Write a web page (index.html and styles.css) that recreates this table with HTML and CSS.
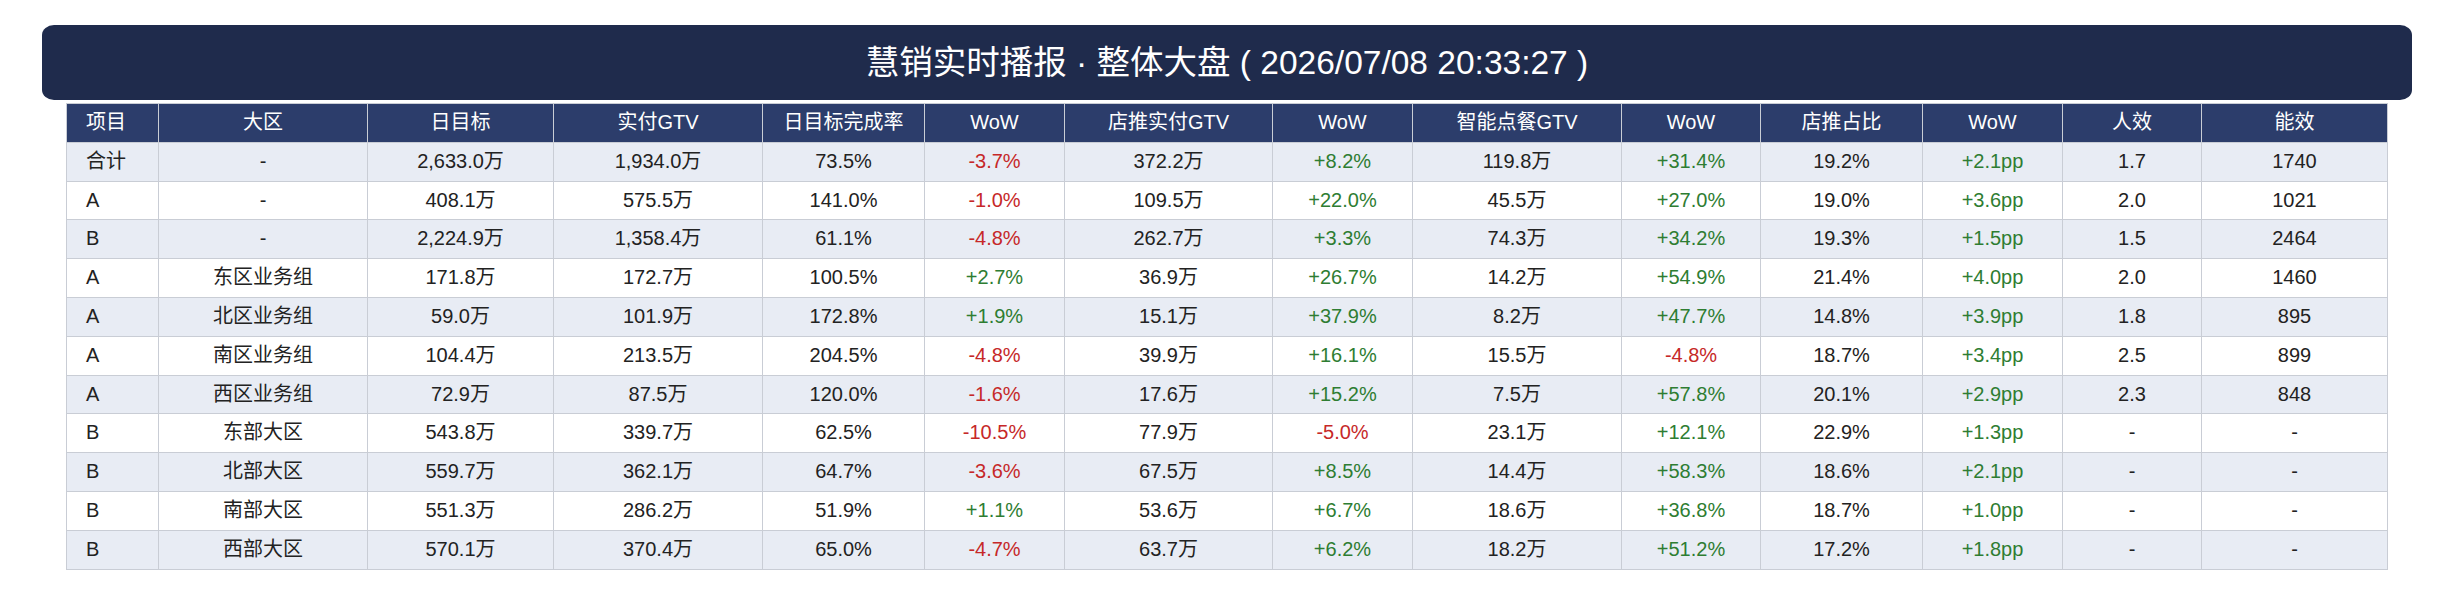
FILE: index.html
```html
<!DOCTYPE html>
<html lang="zh-CN">
<head>
<meta charset="utf-8">
<title>慧销实时播报</title>
<link rel="stylesheet" href="styles.css">
</head>
<body>
<div class="page">
  <div class="banner">慧销实时播报 · 整体大盘 ( 2026/07/08 20:33:27 )</div>
  <table class="report">
    <colgroup>
      <col class="c-item"><col class="c-region"><col class="c-target"><col class="c-gtv"><col class="c-rate"><col class="c-wow"><col class="c-shop"><col class="c-wow"><col class="c-smart"><col class="c-wow2"><col class="c-rate"><col class="c-wow"><col class="c-eff"><col class="c-target">
    </colgroup>
    <thead>
      <tr><th class="first">项目</th><th>大区</th><th>日目标</th><th>实付GTV</th><th>日目标完成率</th><th>WoW</th><th>店推实付GTV</th><th>WoW</th><th>智能点餐GTV</th><th>WoW</th><th>店推占比</th><th>WoW</th><th>人效</th><th>能效</th></tr>
    </thead>
    <tbody>
      <tr><td class="first">合计</td><td>-</td><td>2,633.0万</td><td>1,934.0万</td><td>73.5%</td><td class="down">-3.7%</td><td>372.2万</td><td class="up">+8.2%</td><td>119.8万</td><td class="up">+31.4%</td><td>19.2%</td><td class="up">+2.1pp</td><td>1.7</td><td>1740</td></tr>
      <tr><td class="first">A</td><td>-</td><td>408.1万</td><td>575.5万</td><td>141.0%</td><td class="down">-1.0%</td><td>109.5万</td><td class="up">+22.0%</td><td>45.5万</td><td class="up">+27.0%</td><td>19.0%</td><td class="up">+3.6pp</td><td>2.0</td><td>1021</td></tr>
      <tr><td class="first">B</td><td>-</td><td>2,224.9万</td><td>1,358.4万</td><td>61.1%</td><td class="down">-4.8%</td><td>262.7万</td><td class="up">+3.3%</td><td>74.3万</td><td class="up">+34.2%</td><td>19.3%</td><td class="up">+1.5pp</td><td>1.5</td><td>2464</td></tr>
      <tr><td class="first">A</td><td>东区业务组</td><td>171.8万</td><td>172.7万</td><td>100.5%</td><td class="up">+2.7%</td><td>36.9万</td><td class="up">+26.7%</td><td>14.2万</td><td class="up">+54.9%</td><td>21.4%</td><td class="up">+4.0pp</td><td>2.0</td><td>1460</td></tr>
      <tr><td class="first">A</td><td>北区业务组</td><td>59.0万</td><td>101.9万</td><td>172.8%</td><td class="up">+1.9%</td><td>15.1万</td><td class="up">+37.9%</td><td>8.2万</td><td class="up">+47.7%</td><td>14.8%</td><td class="up">+3.9pp</td><td>1.8</td><td>895</td></tr>
      <tr><td class="first">A</td><td>南区业务组</td><td>104.4万</td><td>213.5万</td><td>204.5%</td><td class="down">-4.8%</td><td>39.9万</td><td class="up">+16.1%</td><td>15.5万</td><td class="down">-4.8%</td><td>18.7%</td><td class="up">+3.4pp</td><td>2.5</td><td>899</td></tr>
      <tr><td class="first">A</td><td>西区业务组</td><td>72.9万</td><td>87.5万</td><td>120.0%</td><td class="down">-1.6%</td><td>17.6万</td><td class="up">+15.2%</td><td>7.5万</td><td class="up">+57.8%</td><td>20.1%</td><td class="up">+2.9pp</td><td>2.3</td><td>848</td></tr>
      <tr><td class="first">B</td><td>东部大区</td><td>543.8万</td><td>339.7万</td><td>62.5%</td><td class="down">-10.5%</td><td>77.9万</td><td class="down">-5.0%</td><td>23.1万</td><td class="up">+12.1%</td><td>22.9%</td><td class="up">+1.3pp</td><td>-</td><td>-</td></tr>
      <tr><td class="first">B</td><td>北部大区</td><td>559.7万</td><td>362.1万</td><td>64.7%</td><td class="down">-3.6%</td><td>67.5万</td><td class="up">+8.5%</td><td>14.4万</td><td class="up">+58.3%</td><td>18.6%</td><td class="up">+2.1pp</td><td>-</td><td>-</td></tr>
      <tr><td class="first">B</td><td>南部大区</td><td>551.3万</td><td>286.2万</td><td>51.9%</td><td class="up">+1.1%</td><td>53.6万</td><td class="up">+6.7%</td><td>18.6万</td><td class="up">+36.8%</td><td>18.7%</td><td class="up">+1.0pp</td><td>-</td><td>-</td></tr>
      <tr><td class="first">B</td><td>西部大区</td><td>570.1万</td><td>370.4万</td><td>65.0%</td><td class="down">-4.7%</td><td>63.7万</td><td class="up">+6.2%</td><td>18.2万</td><td class="up">+51.2%</td><td>17.2%</td><td class="up">+1.8pp</td><td>-</td><td>-</td></tr>
    </tbody>
  </table>
</div>
</body>
</html>
```

FILE: styles.css
```css
html, body {
  margin: 0;
  padding: 0;
  background: #ffffff;
}

body {
  font-family: "Liberation Sans", Arial, "Noto Sans CJK SC", sans-serif;
  color: #222222;
}

.page {
  padding: 25px 41px 0 42px;
}

.banner {
  height: 75px;
  display: flex;
  align-items: center;
  justify-content: center;
  background: #1f2b4c;
  color: #ffffff;
  border-radius: 12px / 10px;
  font-size: 33.5px;
  line-height: 1;
}

.report {
  width: 2321px;
  margin: 3px auto 0;
  border-collapse: collapse;
  table-layout: fixed;
  font-size: 20px;
}

.c-item { width: 92px; }
.c-region { width: 209px; }
.c-target { width: 186px; }
.c-gtv { width: 209px; }
.c-rate { width: 162px; }
.c-wow { width: 140px; }
.c-shop { width: 208px; }
.c-smart { width: 209px; }
.c-wow2 { width: 139px; }
.c-eff { width: 139px; }

.report th,
.report td {
  border: 1px solid #c9cdd5;
  padding: 7px 8px;
  line-height: 23.8px;
  text-align: center;
  font-weight: normal;
  white-space: nowrap;
}

.report th {
  background: #2c3d6b;
  color: #ffffff;
}

.report .first {
  text-align: left;
  padding-left: 19px;
}

.report th.first {
  padding-left: 19px;
}

.report tbody tr:nth-child(odd) td {
  background: #e8ecf4;
}

.report tbody tr:nth-child(even) td {
  background: #ffffff;
}

.report td.up {
  color: #2e7d32;
}

.report td.down {
  color: #c62828;
}
```
